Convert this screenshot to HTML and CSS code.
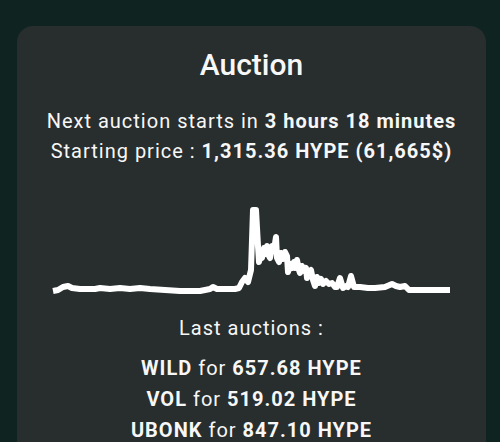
FILE: index.html
```html
<!DOCTYPE html>
<html lang="en">
<head>
    <meta charset="UTF-8">
    <meta name="viewport" content="width=device-width, initial-scale=1.0">
    <title>Auction</title>
    <link rel="stylesheet" href="styles.css">
</head>
<body>

    <!-- Auction card -->
    <div class="auction-card">
        <h1 class="auction-title">Auction</h1>

        <div class="auction-info">
            <p>Next auction starts in <b>3 hours 18 minutes</b></p>
            <p>Starting price : <b>1,315.36 HYPE (61,665$)</b></p>
        </div>

        <!-- Price history -->
        <svg class="price-chart" width="401" height="100" viewBox="51 200 401 100">
            <path d="M53 291 L58 290 L63 287 L68 286 L72 288 L80 289 L95 289 L100 288 L110 289 L120 288 L130 289 L140 288 L150 289 L165 290 L180 291 L200 291 L210 289 L213 287 L217 289 L225 289 L235 289 L239 288 L242 282 L245 278 L248 282 L251 270 L253 210 L256 210 L258 246 L259 262 L261 252 L262 258 L264 248 L266 254 L267 246 L269 256 L270 258 L272 246 L274 250 L276 237 L277 258 L279 262 L281 253 L283 259 L285 252 L287 256 L288 272 L290 264 L292 268 L294 262 L295 268 L297 260 L299 270 L300 273 L302 266 L304 271 L306 268 L307 278 L309 272 L311 270 L313 280 L315 286 L317 277 L319 283 L321 279 L323 284 L326 281 L329 284 L332 283 L335 287 L337 287 L340 278 L343 288 L346 286 L348 287 L351 276 L354 287 L360 287 L368 288 L375 288 L385 287 L392 284 L396 286 L400 287 L405 286 L409 290 L450 290"
                  fill="none" stroke="#ffffff" stroke-width="6" stroke-linejoin="round"/>
        </svg>

        <p class="last-label">Last auctions :</p>
        <ul class="last-list">
            <li><b>WILD</b> for <b>657.68 HYPE</b></li>
            <li><b>VOL</b> for <b>519.02 HYPE</b></li>
            <li><b>UBONK</b> for <b>847.10 HYPE</b></li>
        </ul>
    </div>

</body>
</html>
```

FILE: styles.css
```css
body {
    font-family: 'Roboto', 'Liberation Sans', sans-serif;
    background-color: #0f2421;
    color: #f7f7f7;
    margin: 0;
    padding: 26px 14px 0 17px;
    overflow: hidden;
}

/* Card */
.auction-card {
    background-color: #282d2e;
    border-radius: 16px;
    padding: 21px 0 40px;
    display: flex;
    flex-direction: column;
    align-items: center;
    text-align: center;
}

.auction-title {
    font-size: 30px;
    font-weight: 500;
    line-height: 35px;
    margin: 0;
}

.auction-info {
    margin-top: 24px;
}

.auction-info p {
    font-size: 20px;
    line-height: 30px;
    letter-spacing: 1px;
    margin: 0;
}

b {
    font-weight: 700;
}

/* Chart */
.price-chart {
    display: block;
    margin-top: 34px;
}

.last-label {
    font-size: 20px;
    line-height: 30px;
    letter-spacing: 1px;
    margin: 13px 0 0;
}

.last-list {
    list-style: none;
    margin: 10px 0 0;
    padding: 0;
}

.last-list li {
    font-size: 20px;
    line-height: 31px;
    letter-spacing: 1px;
}
```
